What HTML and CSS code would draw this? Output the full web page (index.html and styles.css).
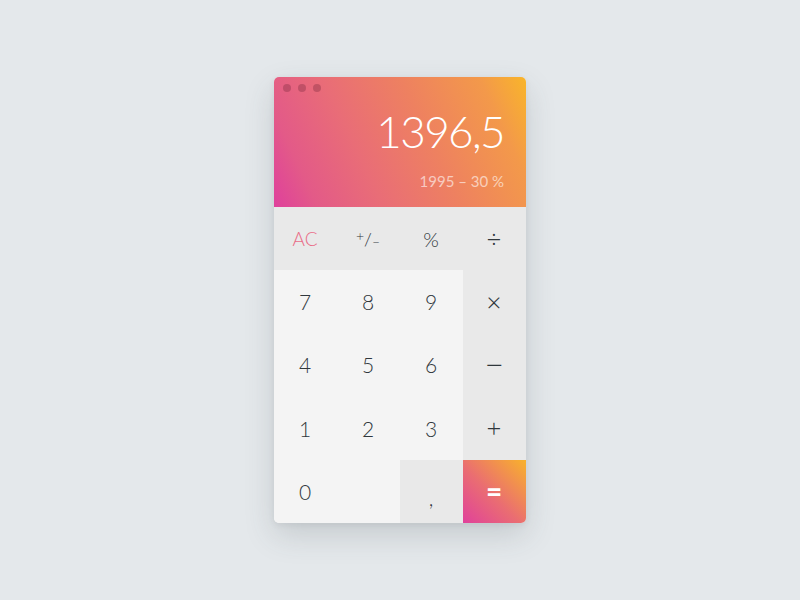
FILE: index.html
```html
<!DOCTYPE html>
<html>
<head>
<meta charset="utf-8">
<link rel="stylesheet" href="styles.css">
</head>
<body>
<div class="calc">
  <div class="display">
    <div class="dots"><span></span><span></span><span></span></div>
    <div class="result">1396,5</div>
    <div class="expr">1995 – 30 %</div>
  </div>
  <div class="keys">
    <div class="key op ac">AC</div>
    <div class="key op"><span class="pm"><sup>+</sup>/<sub>–</sub></span></div>
    <div class="key op pct">%</div>
    <div class="key op sym">÷</div>
    <div class="key num">7</div>
    <div class="key num">8</div>
    <div class="key num">9</div>
    <div class="key op sym">×</div>
    <div class="key num">4</div>
    <div class="key num">5</div>
    <div class="key num">6</div>
    <div class="key op sym minus">−</div>
    <div class="key num">1</div>
    <div class="key num">2</div>
    <div class="key num">3</div>
    <div class="key op sym">+</div>
    <div class="key num">0</div>
    <div class="key num"></div>
    <div class="key op comma">,</div>
    <div class="key eq">=</div>
  </div>
</div>
</body>
</html>
```
FILE: styles.css
```css
html, body {
  margin: 0;
  padding: 0;
}
body {
  width: 800px;
  height: 600px;
  background: #e4e8eb;
  font-family: Lato, "Open Sans", sans-serif;
  display: flex;
  justify-content: center;
  align-items: flex-start;
}
.calc {
  margin-top: 77px;
  width: 252px;
  height: 446px;
  border-radius: 5px;
  overflow: hidden;
  box-shadow: 0 12px 30px rgba(60, 70, 80, 0.18), 0 2px 6px rgba(60, 70, 80, 0.08);
  display: flex;
  flex-direction: column;
  background: #f4f4f4;
}
.display {
  height: 130px;
  box-sizing: border-box;
  padding: 7px 22px 0 9px;
  background: linear-gradient(65deg, #df409c 0%, #e35a88 14%, #e96d77 35%, #ee8160 60%, #f3994a 85%, #f9b52a 100%);
  display: flex;
  flex-direction: column;
  align-items: flex-end;
  color: #fff;
}
.dots {
  align-self: flex-start;
  display: flex;
  gap: 7px;
}
.dots span {
  width: 8px;
  height: 8px;
  border-radius: 50%;
  background: rgba(120, 40, 60, 0.35);
}
.result {
  margin-top: 14px;
  font-size: 44px;
  font-weight: 300;
  line-height: 50px;
  letter-spacing: -1.6px;
}
.expr {
  margin-top: 16px;
  font-size: 15px;
  font-weight: 400;
  color: rgba(255, 255, 255, 0.6);
  line-height: 18px;
}
.keys {
  flex: 1;
  display: grid;
  grid-template-columns: repeat(4, 1fr);
  grid-template-rows: repeat(5, 1fr);
}
.key {
  display: flex;
  align-items: center;
  justify-content: center;
  font-size: 21px;
  font-weight: 300;
  color: #30373c;
  padding-right: 1px;
}
.op {
  background: #e9e9e9;
}
.num {
  background: #f4f4f4;
}
.ac {
  color: #e96c88;
  font-size: 19px;
}
.pct {
  font-weight: 300;
  font-size: 20px;
}
.sym {
  font-family: "Open Sans", Lato, sans-serif;
  font-size: 26px;
  font-weight: 300;
  color: #30373c;
}
.minus {
  font-size: 30px;
}
.pm {
  font-size: 18px;
  display: inline-flex;
  align-items: center;
}
.pm sup {
  font-size: 14px;
  position: relative;
  top: -3px;
  vertical-align: baseline;
}
.pm sub {
  font-size: 14px;
  position: relative;
  top: 3px;
  vertical-align: baseline;
}
.comma {
  padding-top: 12px;
  box-sizing: border-box;
}
.eq {
  background: linear-gradient(to top right, #e0419b 0%, #ea6d72 45%, #f8b22b 100%);
  color: #fff;
  font-size: 28px;
  font-weight: 700;
}
```
